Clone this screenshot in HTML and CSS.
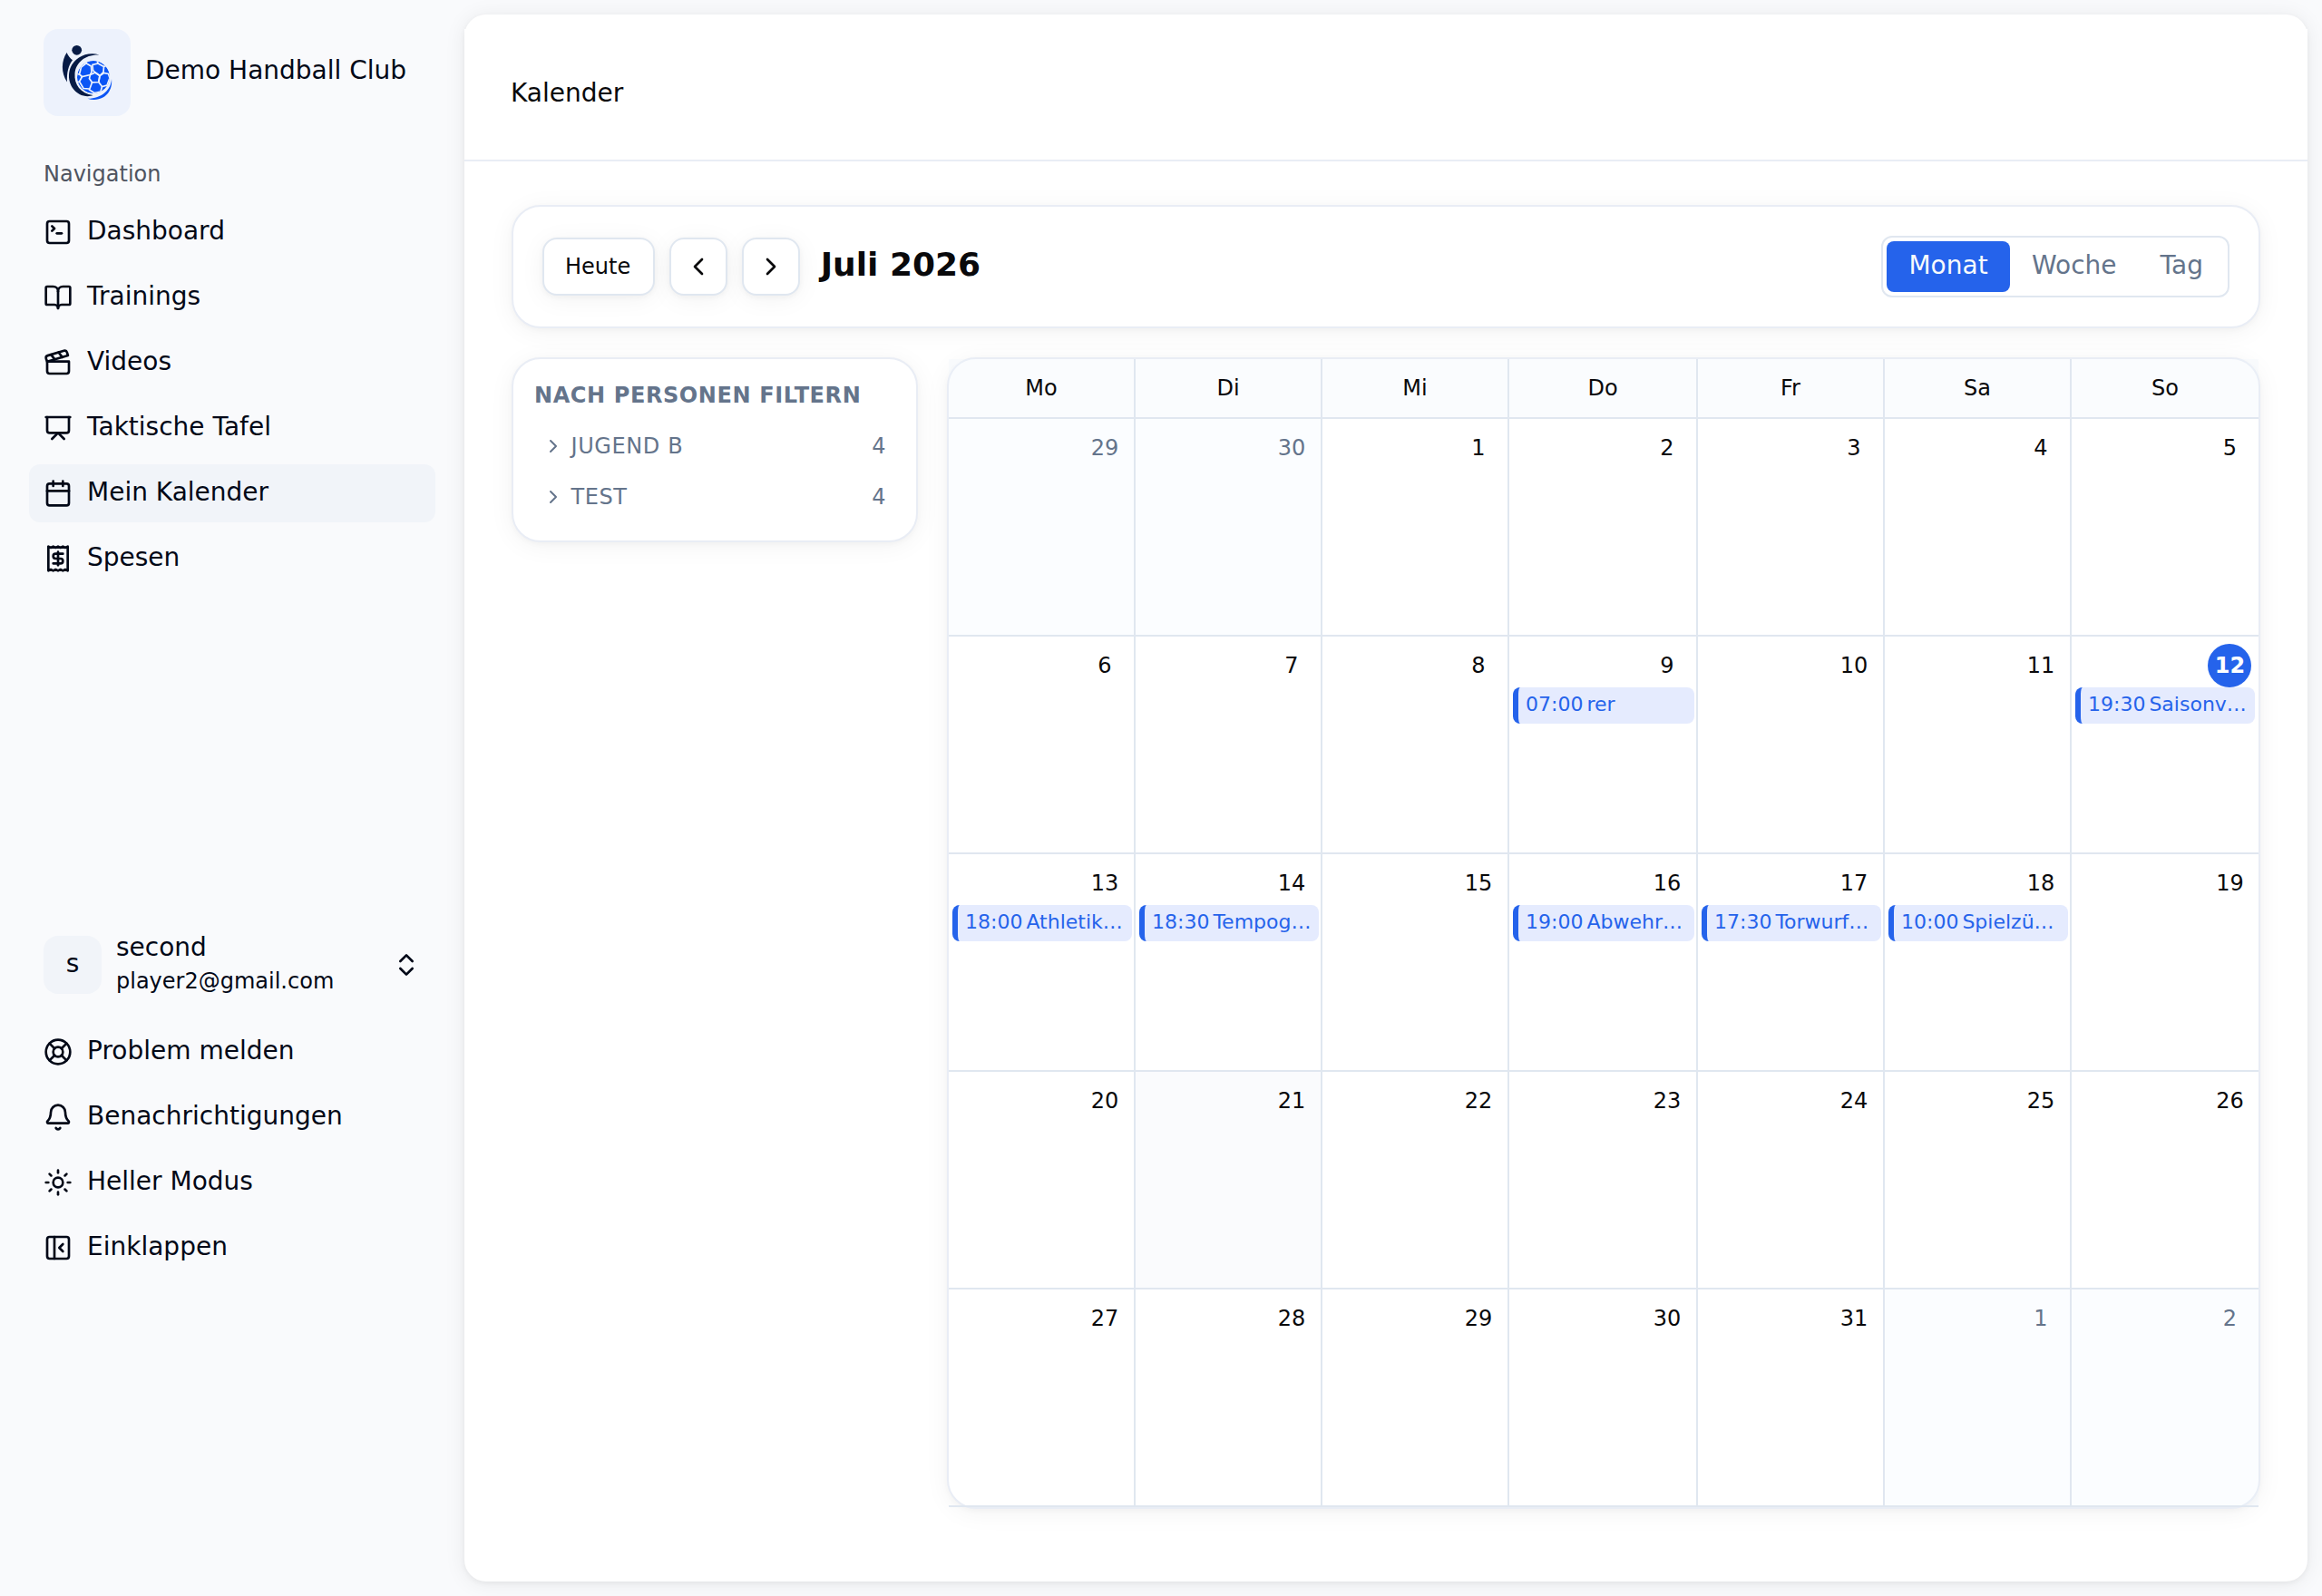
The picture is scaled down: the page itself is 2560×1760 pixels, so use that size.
FILE: index.html
```html
<!DOCTYPE html>
<html lang="de">
<head>
<meta charset="utf-8">
<title>Kalender</title>
<link rel="stylesheet" href="styles.css">
</head>
<body>
<div class="app">
  <aside class="sidebar">
    <div class="brand">
      <div class="brand-logo">
        <svg viewBox="0 0 96 96" width="96" height="96">
          <g fill="#071b45">
            <circle cx="36.7" cy="23.3" r="5.4"/>
            <path d="M25.600 26 C27 29.500 29.500 32.500 32 34.200 C27.500 40 25.400 48 26 58.500 C19 48 19.600 35 25.600 26 Z"/>
            <path d="M61.500 28.500 C48 24.500 34.500 31 29.500 43 C24.500 57 32.500 70.500 44 73.600 C48 74.600 52 74.200 54.500 73 C41 71 33.500 61.500 34.500 49 C35.500 37 46 27.800 61.500 28.500 Z"/>
          </g>
          <path d="M75 55 C74.500 67 64.500 76.500 48.500 76.800 C58 80 68 76.500 72.500 68.500 C75 64 75.500 59.500 75 55 Z" fill="#0b55f5"/>
          <clipPath id="ball"><circle cx="55" cy="53" r="18"/></clipPath>
          <g clip-path="url(#ball)">
            <circle cx="55" cy="53" r="18" fill="#0b55f5"/>
            <g fill="none" stroke="#edf2fc" stroke-width="1.700">
              <path d="M51.500 50.500 L57 48 L62 51.500 L60.800 58.500 L53.500 58.800 L50.500 54.500 Z"/>
              <path d="M51.500 50.500 L42.500 52.500 L39.500 50 L41.500 42 L47 37.800 L52.500 41 L53 47.500 Z"/>
              <path d="M57 48 L54.500 45.500 L54 39.500 L60 38 L66.500 41.500 L66 47.500 L62 51.500 Z"/>
              <path d="M62 51.500 L66.500 48.500 L71.500 49.500 L73 54 L70 62 L64.500 63.500 L60.800 58.500 Z"/>
              <path d="M53.500 58.800 L52 63 L50.500 67 L56 70.500 L63 69 L64.500 63.500"/>
              <path d="M42.500 52.500 L39.500 58 L44 65.500 L50.500 66 M47 37.800 L48 34 M60 38 L59 34 M66.500 41.500 L70 40 M39.500 50 L36 49 M39.500 58 L36 59"/>
            </g>
          </g>
        </svg>
      </div>
      <span class="brand-name">Demo Handball Club</span>
    </div>

    <nav class="nav">
      <div class="nav-label">Navigation</div>
      <a class="nav-item"><svg class="icon" viewBox="0 0 24 24"><path d="m7 11 2-2-2-2"/><path d="M11 13h4"/><rect width="18" height="18" x="3" y="3" rx="2"/></svg><span>Dashboard</span></a>
      <a class="nav-item"><svg class="icon" viewBox="0 0 24 24"><path d="M12 7v14"/><path d="M3 18a1 1 0 0 1-1-1V4a1 1 0 0 1 1-1h5a4 4 0 0 1 4 4 4 4 0 0 1 4-4h5a1 1 0 0 1 1 1v13a1 1 0 0 1-1 1h-6a3 3 0 0 0-3 3 3 3 0 0 0-3-3z"/></svg><span>Trainings</span></a>
      <a class="nav-item"><svg class="icon" viewBox="0 0 24 24"><path d="M20.200 6 3 11l-.900-2.400c-.300-1.100.300-2.200 1.300-2.500l13.500-4c1.100-.300 2.200.300 2.500 1.300Z"/><path d="m6.200 5.300 3.100 3.900"/><path d="m12.400 3.400 3.100 4"/><path d="M3 11h18v8a2 2 0 0 1-2 2H5a2 2 0 0 1-2-2Z"/></svg><span>Videos</span></a>
      <a class="nav-item"><svg class="icon" viewBox="0 0 24 24"><path d="M2 3h20"/><path d="M21 3v11a2 2 0 0 1-2 2H5a2 2 0 0 1-2-2V3"/><path d="m7 21 5-5 5 5"/></svg><span>Taktische Tafel</span></a>
      <a class="nav-item active"><svg class="icon" viewBox="0 0 24 24"><path d="M8 2v4"/><path d="M16 2v4"/><rect width="18" height="18" x="3" y="4" rx="2"/><path d="M3 10h18"/></svg><span>Mein Kalender</span></a>
      <a class="nav-item"><svg class="icon" viewBox="0 0 24 24"><path d="M4 2v20l2-1 2 1 2-1 2 1 2-1 2 1 2-1 2 1V2l-2 1-2-1-2 1-2-1-2 1-2-1-2 1Z"/><path d="M16 8h-6a2 2 0 1 0 0 4h4a2 2 0 1 1 0 4H8"/><path d="M12 17.500v-11"/></svg><span>Spesen</span></a>
    </nav>

    <div class="user">
      <div class="avatar"><span>s</span></div>
      <div class="user-text"><span class="user-name">second</span><span class="user-mail">player2@gmail.com</span></div>
      <svg class="icon" viewBox="0 0 24 24"><path d="m7 15 5 5 5-5"/><path d="m7 9 5-5 5 5"/></svg>
    </div>

    <nav class="nav">
      <a class="nav-item"><svg class="icon" viewBox="0 0 24 24"><circle cx="12" cy="12" r="10"/><path d="m4.930 4.930 4.240 4.240"/><path d="m14.830 9.170 4.240-4.240"/><path d="m14.830 14.830 4.240 4.240"/><path d="m9.170 14.830-4.240 4.240"/><circle cx="12" cy="12" r="4"/></svg><span>Problem melden</span></a>
      <a class="nav-item"><svg class="icon" viewBox="0 0 24 24"><path d="M10.268 21a2 2 0 0 0 3.464 0"/><path d="M3.262 15.326A1 1 0 0 0 4 17h16a1 1 0 0 0 .740-1.673C19.410 13.956 18 12.499 18 8A6 6 0 0 0 6 8c0 4.499-1.411 5.956-2.738 7.326"/></svg><span>Benachrichtigungen</span></a>
      <a class="nav-item"><svg class="icon" viewBox="0 0 24 24"><circle cx="12" cy="12" r="4"/><path d="M12 2v2"/><path d="M12 20v2"/><path d="m4.930 4.930 1.410 1.410"/><path d="m17.660 17.660 1.410 1.410"/><path d="M2 12h2"/><path d="M20 12h2"/><path d="m6.340 17.660-1.410 1.410"/><path d="m19.070 4.930-1.410 1.410"/></svg><span>Heller Modus</span></a>
      <a class="nav-item"><svg class="icon" viewBox="0 0 24 24"><rect width="18" height="18" x="3" y="3" rx="2"/><path d="M9 3v18"/><path d="m16 15-3-3 3-3"/></svg><span>Einklappen</span></a>
    </nav>
  </aside>

  <main class="panel">
    <header class="panel-header"><h1>Kalender</h1></header>
    <div class="content">
      <section class="card toolbar">
        <div class="toolbar-left">
          <button class="btn today">Heute</button>
          <button class="btn square"><svg class="icon" viewBox="0 0 24 24"><path d="m15 18-6-6 6-6"/></svg></button>
          <button class="btn square"><svg class="icon" viewBox="0 0 24 24"><path d="m9 18 6-6-6-6"/></svg></button>
          <h2>Juli 2026</h2>
        </div>
        <div class="segment">
          <button class="segment-item selected"><span>Monat</span></button>
          <button class="segment-item"><span>Woche</span></button>
          <button class="segment-item"><span>Tag</span></button>
        </div>
      </section>

      <div class="columns">
        <section class="card filter">
          <h3>NACH PERSONEN FILTERN</h3>
          <div class="filter-row"><svg class="icon small" viewBox="0 0 24 24"><path d="m9 18 6-6-6-6"/></svg><span class="filter-name">JUGEND B</span><span class="filter-count">4</span></div>
          <div class="filter-row"><svg class="icon small" viewBox="0 0 24 24"><path d="m9 18 6-6-6-6"/></svg><span class="filter-name">TEST</span><span class="filter-count">4</span></div>
        </section>

        <section class="card calendar">
          <div class="weekday">Mo</div><div class="weekday">Di</div><div class="weekday">Mi</div><div class="weekday">Do</div><div class="weekday">Fr</div><div class="weekday">Sa</div><div class="weekday">So</div>

          <div class="day outside"><span class="num">29</span></div>
          <div class="day outside"><span class="num">30</span></div>
          <div class="day"><span class="num">1</span></div>
          <div class="day"><span class="num">2</span></div>
          <div class="day"><span class="num">3</span></div>
          <div class="day"><span class="num">4</span></div>
          <div class="day"><span class="num">5</span></div>

          <div class="day"><span class="num">6</span></div>
          <div class="day"><span class="num">7</span></div>
          <div class="day"><span class="num">8</span></div>
          <div class="day"><span class="num">9</span><div class="event"><span>07:00</span><span>rer</span></div></div>
          <div class="day"><span class="num">10</span></div>
          <div class="day"><span class="num">11</span></div>
          <div class="day"><span class="num today-num">12</span><div class="event"><span>19:30</span><span>Saisonv…</span></div></div>

          <div class="day"><span class="num">13</span><div class="event"><span>18:00</span><span>Athletik…</span></div></div>
          <div class="day"><span class="num">14</span><div class="event"><span>18:30</span><span>Tempog…</span></div></div>
          <div class="day"><span class="num">15</span></div>
          <div class="day"><span class="num">16</span><div class="event"><span>19:00</span><span>Abwehr…</span></div></div>
          <div class="day"><span class="num">17</span><div class="event"><span>17:30</span><span>Torwurf…</span></div></div>
          <div class="day"><span class="num">18</span><div class="event"><span>10:00</span><span>Spielzü…</span></div></div>
          <div class="day"><span class="num">19</span></div>

          <div class="day"><span class="num">20</span></div>
          <div class="day hovered"><span class="num">21</span></div>
          <div class="day"><span class="num">22</span></div>
          <div class="day"><span class="num">23</span></div>
          <div class="day"><span class="num">24</span></div>
          <div class="day"><span class="num">25</span></div>
          <div class="day"><span class="num">26</span></div>

          <div class="day"><span class="num">27</span></div>
          <div class="day"><span class="num">28</span></div>
          <div class="day"><span class="num">29</span></div>
          <div class="day"><span class="num">30</span></div>
          <div class="day"><span class="num">31</span></div>
          <div class="day outside"><span class="num">1</span></div>
          <div class="day outside"><span class="num">2</span></div>
        </section>
      </div>
    </div>
  </main>
</div>
</body>
</html>
```
FILE: styles.css
```css
:root {
  --ink: #020817;
  --text: #09090b;
  --muted: #64748b;
  --line: #e0e7f0;
  --line-soft: #e9edf5;
  --primary: #2563eb;
}

* { box-sizing: border-box; margin: 0; padding: 0; }

body {
  font-family: "DejaVu Sans", Verdana, sans-serif;
  font-size: 28px;
  line-height: 40px;
  color: var(--text);
  background: #f9fafc;
}

button { font: inherit; color: inherit; border: 0; background: none; }
h1, h2, h3 { font-size: inherit; font-weight: 400; }

.icon {
  width: 32px;
  height: 32px;
  flex: none;
  fill: none;
  stroke: currentColor;
  stroke-width: 2;
  stroke-linecap: round;
  stroke-linejoin: round;
}
.icon.small { width: 24px; height: 24px; }

.app { display: flex; width: 2560px; height: 1760px; overflow: hidden; }

/* Sidebar */
.sidebar {
  display: flex;
  flex-direction: column;
  width: 512px;
  flex: none;
  padding: 32px;
  color: var(--ink);
}

.brand { display: flex; align-items: center; gap: 16px; padding-left: 16px; }
.brand-logo { width: 96px; height: 96px; border-radius: 16px; background: #edf2fc; }
.brand-logo svg { display: block; }
.brand-name { padding-bottom: 5px; }

.nav { display: flex; flex-direction: column; gap: 8px; }
.nav-label {
  height: 64px;
  margin: 32px 0 -8px;
  padding-left: 16px;
  font-size: 24px;
  line-height: 64px;
  color: #4f5461;
}
.nav-item {
  display: flex;
  align-items: center;
  gap: 16px;
  height: 64px;
  padding: 0 16px;
  border-radius: 12px;
}
.nav-item span { padding-bottom: 3px; }
.nav-item.active { background: #f1f4f9; }

.user {
  display: flex;
  align-items: center;
  gap: 16px;
  height: 96px;
  margin: 368px 0 16px;
  padding: 0 16px;
}
.avatar {
  display: flex;
  align-items: center;
  justify-content: center;
  width: 64px;
  height: 64px;
  border-radius: 16px;
  background: #f1f4f9;
}
.avatar span { padding-bottom: 2px; }
.user-text { display: flex; flex-direction: column; flex: 1; }
.user-name { line-height: 35px; }
.user-mail { margin-top: 1px; font-size: 24px; line-height: 38px; }

/* Main panel */
.panel {
  flex: 1;
  margin: 16px 16px 16px 0;
  padding-top: 16px;
  border-radius: 24px;
  background: #fff;
  box-shadow: 0 2px 6px rgba(0, 0, 0, .05), 0 2px 24px rgba(0, 0, 0, .07);
}
.panel-header {
  display: flex;
  align-items: center;
  height: 146px;
  padding: 0 51px 3px;
  border-bottom: 2px solid var(--line-soft);
  background: #fff;
}
.content { display: flex; flex-direction: column; gap: 32px; padding: 48px 52px; }

.card {
  border: 2px solid var(--line-soft);
  border-radius: 32px;
  background: #fff;
  box-shadow: 0 2px 6px rgba(0, 0, 0, .03), 0 4px 28px rgba(0, 0, 0, .05);
}

.toolbar { display: flex; align-items: center; justify-content: space-between; height: 136px; padding: 0 32px; }
.toolbar-left { display: flex; align-items: center; gap: 16px; }
.btn {
  display: flex;
  align-items: center;
  justify-content: center;
  height: 64px;
  border: 2px solid var(--line);
  border-radius: 16px;
  background: #fff;
  box-shadow: 0 2px 6px rgba(0, 0, 0, .04), 0 4px 28px rgba(0, 0, 0, .05);
}
.today { padding: 0 25px 0 23px; font-size: 24px; }
.square { width: 64px; }
.toolbar h2 { margin-left: 6.5px; padding-bottom: 4px; font-size: 36px; font-weight: 700; }

.segment { display: flex; height: 68px; padding: 4px; border: 2px solid var(--line); border-radius: 12px; }
.segment-item { height: 56px; padding: 0 24px; border-radius: 8px; color: var(--muted); }
.segment-item:last-child { padding-right: 23px; }
.segment-item span { display: block; padding-bottom: 3px; }
.segment-item.selected { min-width: 136px; background: var(--primary); color: #f8fafc; }

.columns { display: flex; align-items: flex-start; gap: 32px; }

.filter { width: 448px; height: 204px; padding: 24px; font-size: 24px; letter-spacing: .6px; color: var(--muted); }
.filter h3 { margin: 0 0 16px -1px; line-height: 32px; font-weight: 700; }
.filter-row { display: flex; align-items: center; gap: 8px; height: 48px; margin-bottom: 8px; padding: 0 8px; }
.filter-name { flex: 1; margin-left: -.5px; }
.filter-count { margin-right: 1px; }

/* Month grid */
.calendar {
  display: grid;
  grid-template-columns: repeat(3, 206px) 208px repeat(3, 206px);
  grid-template-rows: 66px repeat(5, 240px);
  flex: 1;
  height: 1270px;
  font-size: 24px;
}
.weekday, .day { min-width: 0; border-right: 2px solid var(--line); border-bottom: 2px solid var(--line); }
.weekday:nth-child(7n), .day:nth-child(7n) { border-right: 0; }
.weekday { line-height: 64px; text-align: center; background: rgba(239, 245, 252, .3); }
.day { padding-top: 8px; }
.outside { background: rgba(239, 245, 253, .22); color: var(--muted); }
.hovered { background: #fafbfd; }
.num {
  display: block;
  width: 48px;
  height: 48px;
  margin: 0 8px 0 auto;
  border-radius: 50%;
  line-height: 48px;
  text-align: center;
}
.day:nth-child(7n) .num { text-indent: 1px; }
.today-num { background: var(--primary); color: #fff; font-weight: 700; }
.event {
  display: flex;
  gap: 4px;
  height: 40px;
  margin: 0 2px 0 4px;
  padding-left: 8px;
  overflow: hidden;
  border-left: 6px solid var(--primary);
  border-radius: 8px;
  background: #e5ebfe;
  font-size: 22px;
  line-height: 38px;
  white-space: nowrap;
  color: var(--primary);
}
.day:nth-child(7n) .event { margin-right: 4px; }
```
